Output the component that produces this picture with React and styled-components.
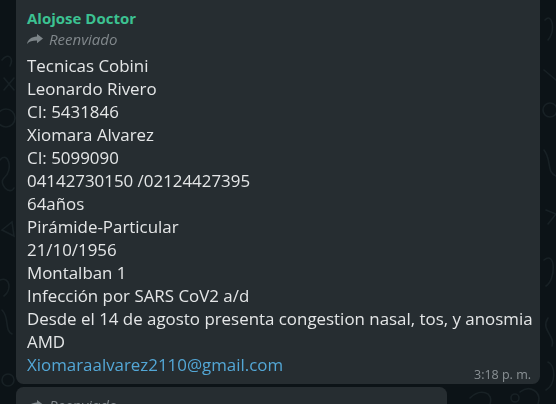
import React from "react";
import styled, { createGlobalStyle } from "styled-components";

const Global = createGlobalStyle`
    html, body {
        margin: 0;
        padding: 0;
        background: #0c1317;
        overflow: hidden;
    }
    body {
        font-family: "Open Sans", "Segoe UI", "Noto Sans", sans-serif;
    }
`

const lines = [
    "Tecnicas Cobini",
    "Leonardo Rivero",
    "CI: 5431846",
    "Xiomara Alvarez",
    "CI: 5099090",
    "04142730150 /02124427395",
    "64años",
    "Pirámide-Particular",
    "21/10/1956",
    "Montalban 1",
    "Infección por SARS CoV2 a/d",
    "Desde el 14 de agosto presenta congestion nasal, tos, y anosmia",
    "AMD",
];

function ForwardIcon() {
    return (
        <svg width="16" height="10" viewBox="0 0 16 10">
            <path
                d="M10 0 L16 4.6 L10 9.2 V6.6 C5.2 6.6 2.3 7.6 0 10 C0.9 5.6 4.2 2.9 10 2.6 Z"
                fill="#7c8488"
            />
        </svg>
    );
}

// papel de parede com rabiscos bem apagados
function Wallpaper() {
    return (
        <Doodles width="556" height="404" viewBox="0 0 556 404">
            <g fill="none" stroke="#182125" strokeWidth="1.6" strokeLinecap="round">
                <path d="M2 60 C8 52 14 58 10 66 M4 78 L14 90 M14 78 L4 90" />
                <circle cx="6" cy="118" r="9" />
                <path d="M0 160 C8 150 14 170 4 178 C-2 184 10 196 14 188" />
                <path d="M2 230 L12 222 L14 236 Z" />
                <path d="M0 280 C10 276 12 290 4 296 M2 310 C10 318 4 330 12 334" />
                <circle cx="8" cy="380" r="6" />
                <path d="M545 20 C552 12 556 30 548 40 M544 70 L556 80" />
                <circle cx="550" cy="110" r="7" />
                <path d="M544 150 C552 160 546 172 556 176 M546 210 L556 214 L548 224" />
                <path d="M544 260 C556 250 556 280 546 286 M548 318 C540 330 556 336 552 346" />
                <path d="M470 398 C480 388 494 392 490 404 M520 392 C530 384 542 392 538 404" />
                <circle cx="515" cy="398" r="4" />
                <path d="M548 362 C556 366 556 384 546 390" />
            </g>
        </Doodles>
    );
}

export default function App() {
    return (
        <>
            <Global />
            <Wallpaper />
            <Chat>
                <Bubble>
                    <Sender>Alojose Doctor</Sender>
                    <Forwarded>
                        <ForwardIcon />
                        <span>Reenviado</span>
                    </Forwarded>
                    <Body>
                        {lines.map((line, i) => <Line key={i}>{line}</Line>)}
                        <LastRow>
                            <Link>Xiomaraalvarez2110@gmail.com</Link>
                            <Time>3:18 p. m.</Time>
                        </LastRow>
                    </Body>
                </Bubble>
                <Bubble narrow>
                    <Forwarded>
                        <ForwardIcon />
                        <span>Reenviado</span>
                    </Forwarded>
                </Bubble>
            </Chat>
        </>
    );
}

const Doodles = styled.svg`
    position: fixed;
    left: 0;
    top: 0;
    z-index: 0;
`

const Chat = styled.div`
    position: relative;
    z-index: 1;
    display: flex;
    flex-direction: column;
    gap: 3px;
    padding: 0 16px;
    margin-top: -30px;
`

const Bubble = styled.div`
    box-sizing: border-box;
    width: ${props => props.narrow ? "431px" : "524px"};
    background: #262d31;
    border-radius: 7.5px;
    padding: ${props => props.narrow ? "7px 9px 6px 11px" : "38px 9px 8px 11px"};
`

const Sender = styled.div`
    font-weight: 700;
    font-size: 15px;
    line-height: 20px;
    color: #3cc292;
`

const Forwarded = styled.div`
    display: flex;
    align-items: center;
    gap: 6px;
    height: 22px;
    font-style: italic;
    font-size: 15px;
    color: #80878b;
`

const Body = styled.div`
    margin-top: 4px;
    font-size: 16.9px;
    line-height: 23px;
    color: #e4e6e7;
`

const Line = styled.div`
    white-space: nowrap;
`

const LastRow = styled.div`
    display: flex;
    justify-content: space-between;
    align-items: flex-end;
`

const Link = styled.span`
    color: #53a7d6;
`

const Time = styled.span`
    font-size: 12.5px;
    line-height: 15px;
    color: #8a9195;
    margin-bottom: -6px;
`
